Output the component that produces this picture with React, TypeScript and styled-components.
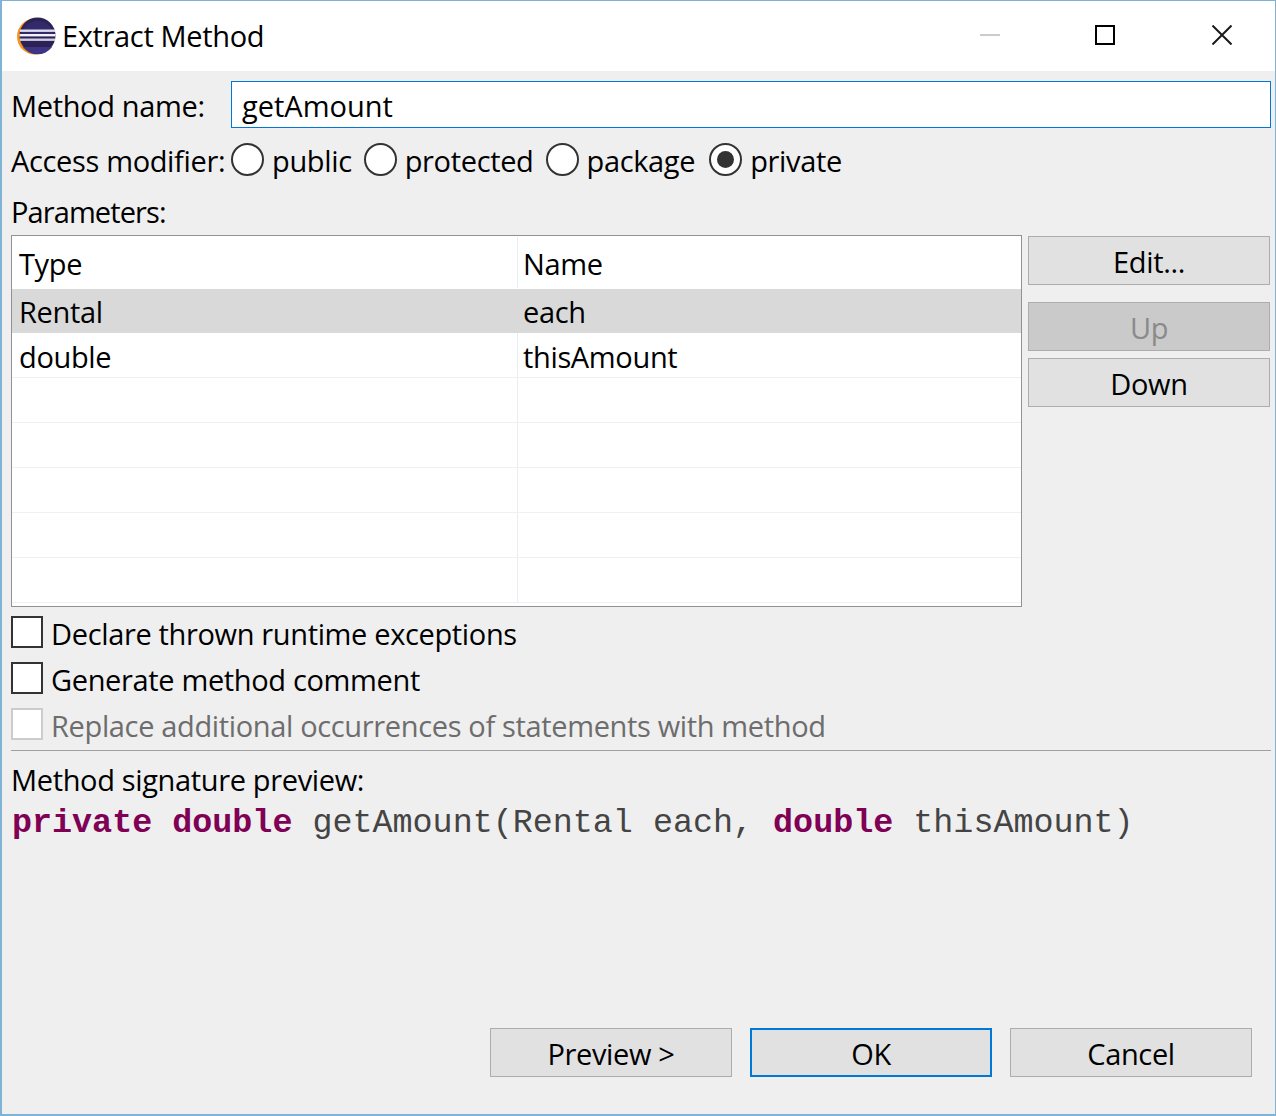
import React from 'react';
import styled, { createGlobalStyle } from 'styled-components';

const GlobalStyle = createGlobalStyle`
  html, body {
    margin: 0;
    padding: 0;
    background: #efefef;
  }
  * {
    box-sizing: border-box;
  }
`;

const Dialog = styled.div`
  width: 1276px;
  height: 1116px;
  display: flex;
  flex-direction: column;
  border: solid #7fb3d5;
  border-width: 1px 1px 2px 2px;
  background: #efefef;
  font-family: 'Open Sans', 'Noto Sans', sans-serif;
  font-size: 29px;
  letter-spacing: -0.35px;
  color: #000;
`;

const TitleBar = styled.div`
  height: 70px;
  flex: none;
  display: flex;
  align-items: center;
  background: #fff;
  padding: 0 43px 0 13px;
`;

const TitleText = styled.span`
  margin-left: 5px;
  padding-bottom: 2px;
  flex: 1;
`;

const WindowControls = styled.div`
  display: flex;
  align-items: center;
  gap: 95px;
  padding-bottom: 2px;
`;

const CloseIcon = styled.svg`
  margin-left: 2px;
`;

const Body = styled.div`
  flex: 1;
  display: flex;
  flex-direction: column;
  padding: 10px 4px 0 9px;
`;

const NameRow = styled.div`
  display: flex;
  align-items: center;
  height: 47px;
`;

const FieldLabel = styled.span`
  width: 220px;
  padding-top: 2px;
`;

const NameInput = styled.div`
  flex: 1;
  height: 47px;
  padding: 2px 0 0 10px;
  display: flex;
  align-items: center;
  background: #fff;
  border: 1px solid #0078d7;
  letter-spacing: 0;
`;

const ModifierRow = styled.div`
  display: flex;
  align-items: center;
  height: 46px;
  margin-top: 8px;
`;

const RadioOption = styled.label`
  display: flex;
  align-items: center;
  margin-right: 12px;
  &:last-child {
    margin-left: 2px;
  }
`;

const Radio = styled.span<{ $checked?: boolean }>`
  width: 33px;
  height: 33px;
  margin-right: 8px;
  border-radius: 50%;
  border: 2px solid #333;
  background: #fff;
  display: flex;
  align-items: center;
  justify-content: center;
  &::after {
    content: '';
    display: ${p => (p.$checked ? 'block' : 'none')};
    width: 17px;
    height: 17px;
    border-radius: 50%;
    background: #333;
  }
`;

const RadioText = styled.span`
  padding-top: 2px;
`;

const SectionLabel = styled.div`
  height: 40px;
  margin-top: 13px;
  line-height: 34px;
  letter-spacing: -0.9px;
`;

const ParamsRow = styled.div`
  display: flex;
  gap: 6px;
  align-items: flex-start;
`;

const Table = styled.div`
  width: 1011px;
  height: 372px;
  flex: none;
  border: 1px solid #8f9398;
  background: #fff;
  padding-top: 1px;
  overflow: hidden;
`;

const TableRow = styled.div<{ $selected?: boolean; $header?: boolean }>`
  display: grid;
  grid-template-columns: 506px 1fr;
  height: ${p => (p.$header ? '52px' : p.$selected ? '44px' : '45px')};
  background: ${p => (p.$selected ? '#d9d9d9' : '#fff')};
  border-bottom: 1px solid ${p => (p.$selected || p.$header ? 'transparent' : '#f0f0f0')};
`;

const Cell = styled.div<{ $first?: boolean; $divider?: boolean }>`
  display: flex;
  align-items: center;
  padding-top: 2px;
  padding-left: ${p => (p.$first ? '7px' : '5px')};
  border-right: 1px solid ${p => (p.$divider ? '#e8edf3' : 'transparent')};
`;

const SideButtons = styled.div`
  display: flex;
  flex-direction: column;
  width: 242px;
  padding-top: 1px;
`;

const PushButton = styled.div<{ $disabled?: boolean; $focused?: boolean }>`
  width: 242px;
  height: 49px;
  padding-top: 2px;
  display: flex;
  align-items: center;
  justify-content: center;
  background: ${p => (p.$disabled ? '#cacaca' : '#e1e1e1')};
  color: ${p => (p.$disabled ? '#8a8a8a' : '#000')};
  border: ${p => (p.$focused ? '2px solid #0078d7' : '1px solid #adadad')};
`;

const UpButton = styled(PushButton)`
  margin-top: 17px;
`;

const DownButton = styled(PushButton)`
  margin-top: 7px;
`;

const CheckRows = styled.div`
  display: flex;
  flex-direction: column;
  gap: 14px;
  margin-top: 9px;
`;

const CheckRow = styled.div<{ $disabled?: boolean }>`
  display: flex;
  align-items: center;
  height: 32px;
  color: ${p => (p.$disabled ? '#6d6d6d' : '#000')};
`;

const CheckBox = styled.span<{ $disabled?: boolean }>`
  width: 32px;
  height: 32px;
  margin-right: 8px;
  flex: none;
  background: #fff;
  border: 2px solid ${p => (p.$disabled ? '#cccccc' : '#333')};
`;

const CheckText = styled.span`
  padding-top: 2px;
`;

const Separator = styled.div`
  height: 1px;
  margin-top: 10px;
  background: #a0a0a0;
`;

const PreviewLabel = styled.div`
  height: 46px;
  margin-top: 7px;
  line-height: 43px;
`;

const Signature = styled.div`
  padding-left: 1px;
  height: 40px;
  line-height: 38px;
  font-family: 'Liberation Mono', monospace;
  font-size: 33.38px;
  letter-spacing: 0;
  color: #444;
  white-space: pre;
`;

const Keyword = styled.span`
  color: #7f0055;
  font-weight: bold;
`;

const Footer = styled.div`
  display: flex;
  gap: 18px;
  margin-top: auto;
  margin-bottom: 37px;
  margin-left: 479px;
`;

const EclipseIcon = () => (
  <svg width="42" height="38" viewBox="0 0 42 38">
    <circle cx="20" cy="19.5" r="18" fill="#f7941e" />
    <circle cx="22.5" cy="18.5" r="18" fill="#2c2255" />
    <path d="M6 17 a17 17 0 0 1 33 0 z" fill="#332a6b" />
    <path d="M8 30 a18 18 0 0 0 29 0 z" fill="#3d3485" />
    <rect x="5" y="12.5" width="35" height="2.4" fill="#dcdcec" />
    <rect x="4.5" y="17" width="36" height="2.4" fill="#f2f2fa" />
    <rect x="5" y="21.5" width="35" height="2.4" fill="#d0d0e4" />
  </svg>
);

const params = [
  ['Rental', 'each'],
  ['double', 'thisAmount'],
  ['', ''],
  ['', ''],
  ['', ''],
  ['', ''],
  ['', ''],
];

const modifiers = ['public', 'protected', 'package', 'private'];

export default function App() {
  return (
    <Dialog>
      <GlobalStyle />
      <TitleBar>
        <EclipseIcon />
        <TitleText>Extract Method</TitleText>
        <WindowControls>
          <svg width="20" height="20" viewBox="0 0 20 20">
            <rect x="0" y="9" width="20" height="2" fill="#cccccc" />
          </svg>
          <svg width="20" height="20" viewBox="0 0 20 20">
            <rect x="1" y="1" width="18" height="18" fill="none" stroke="#000" strokeWidth="2" />
          </svg>
          <CloseIcon width="20" height="20" viewBox="0 0 20 20">
            <path d="M0.5 0.5 L19.5 19.5 M19.5 0.5 L0.5 19.5" stroke="#1a1a1a" strokeWidth="2" fill="none" />
          </CloseIcon>
        </WindowControls>
      </TitleBar>
      <Body>
        <NameRow>
          <FieldLabel>Method name:</FieldLabel>
          <NameInput>getAmount</NameInput>
        </NameRow>
        <ModifierRow>
          <FieldLabel>Access modifier:</FieldLabel>
          {modifiers.map(m => (
            <RadioOption key={m}>
              <Radio $checked={m === 'private'} />
              <RadioText>{m}</RadioText>
            </RadioOption>
          ))}
        </ModifierRow>
        <SectionLabel>Parameters:</SectionLabel>
        <ParamsRow>
          <Table>
            <TableRow $header>
              <Cell $first $divider>
                Type
              </Cell>
              <Cell>Name</Cell>
            </TableRow>
            {params.map(([type, name], i) => (
              <TableRow key={i} $selected={i === 0}>
                <Cell $first $divider={i !== 0}>
                  {type}
                </Cell>
                <Cell>{name}</Cell>
              </TableRow>
            ))}
          </Table>
          <SideButtons>
            <PushButton>Edit...</PushButton>
            <UpButton $disabled>Up</UpButton>
            <DownButton>Down</DownButton>
          </SideButtons>
        </ParamsRow>
        <CheckRows>
          <CheckRow>
            <CheckBox />
            <CheckText>Declare thrown runtime exceptions</CheckText>
          </CheckRow>
          <CheckRow>
            <CheckBox />
            <CheckText>Generate method comment</CheckText>
          </CheckRow>
          <CheckRow $disabled>
            <CheckBox $disabled />
            <CheckText>Replace additional occurrences of statements with method</CheckText>
          </CheckRow>
        </CheckRows>
        <Separator />
        <PreviewLabel>Method signature preview:</PreviewLabel>
        <Signature>
          <Keyword>private</Keyword> <Keyword>double</Keyword> getAmount(Rental each, <Keyword>double</Keyword> thisAmount)
        </Signature>
        <Footer>
          <PushButton>Preview &gt;</PushButton>
          <PushButton $focused>OK</PushButton>
          <PushButton>Cancel</PushButton>
        </Footer>
      </Body>
    </Dialog>
  );
}
